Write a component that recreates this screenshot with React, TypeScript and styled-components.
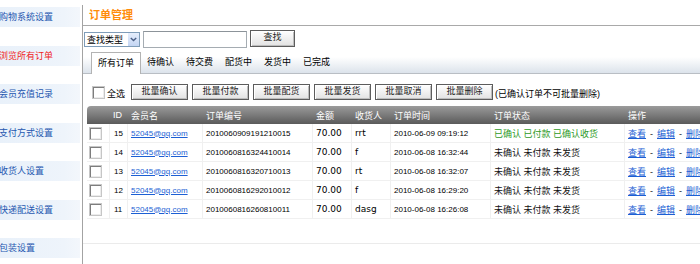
import styled, { createGlobalStyle } from 'styled-components';

type Order = {
  id: number
  no: string
  receiver: string
  time: string
  status: string
  done: boolean
}

const orders: Order[] = [
  { id: 15, no: '2010060909191210015', receiver: 'rrt', time: '2010-06-09 09:19:12', status: '已确认 已付款 已确认收货', done: true },
  { id: 14, no: '2010060816324410014', receiver: 'f', time: '2010-06-08 16:32:44', status: '未确认 未付款 未发货', done: false },
  { id: 13, no: '2010060816320710013', receiver: 'rt', time: '2010-06-08 16:32:07', status: '未确认 未付款 未发货', done: false },
  { id: 12, no: '2010060816292010012', receiver: 'f', time: '2010-06-08 16:29:20', status: '未确认 未付款 未发货', done: false },
  { id: 11, no: '2010060816260810011', receiver: 'dasg', time: '2010-06-08 16:26:08', status: '未确认 未付款 未发货', done: false },
];

const menu = ['购物系统设置', '浏览所有订单', '会员充值记录', '支付方式设置', '收货人设置', '快递配送设置', '包装设置'];
const tabs = ['所有订单', '待确认', '待交费', '配货中', '发货中', '已完成'];
const batch = ['批量确认', '批量付款', '批量配货', '批量发货', '批量取消', '批量删除'];

const GlobalStyle = createGlobalStyle`
  html, body {
    margin: 0;
    padding: 0;
    background: #fff;
    overflow: hidden;
  }
  body {
    font-family: "Liberation Sans", "Noto Sans CJK SC", sans-serif;
    font-size: 9px;
    color: #000;
  }
`;

const Page = styled.div`
  display: flex;
  align-items: flex-start;
  width: 700px;
  height: 264px;
  overflow: hidden;
`;

const Sidebar = styled.div`
  flex: none;
  width: 80px;
  margin-right: 2px;
  padding-top: 7px;
  display: flex;
  flex-direction: column;
  gap: 18.5px;
`;

const MenuItem = styled.div<{ $active?: boolean }>`
  height: 20px;
  line-height: 20px;
  background: linear-gradient(to right, #e9f1fa 0%, #eef4fb 80%, #f3f7fc 100%);
  color: ${(p) => (p.$active ? '#f01c1c' : '#2557b0')};
  white-space: nowrap;
  overflow: hidden;
  text-indent: -1px;
`;

const Main = styled.div`
  flex: 1;
  min-width: 0;
  overflow: hidden;
  margin-top: 5px;
  height: 259px;
  border-left: 1px solid #a3a3a3;
`;

const Title = styled.div`
  height: 20px;
  line-height: 20px;
  padding-left: 6px;
  border-bottom: 1px solid #a9a9a9;
  color: #ff8c0a;
  font-size: 11px;
  font-weight: bold;
`;

const SearchRow = styled.div`
  display: flex;
  align-items: center;
  gap: 3px;
  height: 18px;
  margin-top: 4px;
  padding-left: 1px;
`;

const SelectBox = styled.div`
  box-sizing: border-box;
  width: 56px;
  height: 15px;
  border: 1px solid #7f9db9;
  display: flex;
  align-items: center;
  justify-content: space-between;
  padding-left: 2px;
`;

const SelectArrow = styled.span`
  width: 11px;
  height: 13px;
  background: linear-gradient(#e6eefc, #c3d5f3);
  display: flex;
  align-items: center;
  justify-content: center;
`;

const TextInput = styled.div`
  box-sizing: border-box;
  width: 104px;
  height: 17px;
  border: 1px solid #a5acb2;
  border-top-color: #8c9399;
  background: #fff;
`;

const Button = styled.button<{ $w: number }>`
  box-sizing: border-box;
  width: ${(p) => p.$w}px;
  height: 16px;
  padding: 0 0 2px;
  border: 1px solid #5c5c5c;
  background: linear-gradient(#ffffff, #e2e2e2);
  box-shadow: inset 1px 1px 0 #fff, inset -1px -1px 0 #bdbdbd;
  font-family: "Liberation Sans", "Noto Sans CJK SC", sans-serif;
  font-size: 9px;
  line-height: 12px;
  color: #222;
`;

const SearchButton = styled(Button)`
  height: 17px;
  margin-top: -2px;
`;

const TabBar = styled.div`
  display: flex;
  height: 21px;
  margin-top: 4px;
  padding-left: 8px;
  border-bottom: 1px solid #b9bec4;
  background: linear-gradient(to bottom, #fff 0, #fff 5px, #dce3eb 100%);
`;

const Tab = styled.div<{ $active?: boolean }>`
  height: ${(p) => (p.$active ? 22 : 21)}px;
  line-height: 21px;
  padding: 0 6px;
  white-space: nowrap;
  ${(p) => p.$active && `
    background: #fff;
    border: 1px solid #b3b3b3;
    border-bottom: none;
    box-sizing: border-box;
    margin-bottom: -1px;
  `}
`;

const BatchRow = styled.div`
  display: flex;
  align-items: center;
  height: 16px;
  margin-top: 10px;
  padding-left: 9px;
  white-space: nowrap;
`;

const Check = styled.span`
  display: inline-block;
  box-sizing: border-box;
  width: 13px;
  height: 13px;
  border: 1px solid #c6c6c6;
  background: #fff;
  box-shadow: inset 1px 1px 0 #7d7d7d, inset -1px -1px 0 #ececec;
  vertical-align: middle;
`;

const CheckLabel = styled.span`
  margin-left: 2px;
  margin-top: 3px;
`;

const ButtonGroup = styled.div`
  display: flex;
  gap: 4px;
  margin-left: 6px;
`;

const Note = styled.span`
  margin-left: 2px;
  margin-top: 3px;
`;

const Table = styled.table`
  margin: 6px 0 0 4px;
  width: 640px;
  border-collapse: separate;
  border-spacing: 0;
  table-layout: fixed;

  th {
    height: 18px;
    padding: 0 0 0 3px;
    text-align: left;
    font-weight: normal;
    color: #fff;
    font-size: 9px;
    background: linear-gradient(#9b9b9b, #5a5a5a);
    white-space: nowrap;
  }
  th:first-child {
    border-top-left-radius: 4px;
  }
  td {
    box-sizing: border-box;
    height: 19px;
    padding: 0 0 0 3px;
    border-right: 1px solid #f0f0f0;
    border-bottom: 1px solid #f0f0f0;
    font-size: 8px;
    white-space: nowrap;
    overflow: hidden;
  }
  td.check {
    padding-left: 2px;
  }
  td.id {
    padding-left: 4px;
  }
`;

const Wide = styled.span`
  font-family: "DejaVu Sans", sans-serif;
  font-size: 9px;
`;

const Status = styled.span<{ $done: boolean }>`
  font-size: 9px;
  color: ${(p) => (p.$done ? '#2e9a1e' : '#111')};
`;

const Link = styled.a`
  color: #1c5fd4;
  text-decoration: underline;
`;

const Ops = styled.span`
  font-size: 9px;
  color: #222;
`;

const Sep = styled.span`
  margin: 0 4px;
`;

const Footer = styled.div`
  height: 24px;
  border-bottom: 1px solid #ebebeb;
`;

export default function App() {
  return (
    <>
      <GlobalStyle />
      <Page>
        <Sidebar>
          {menu.map((m, i) => (
            <MenuItem key={m} $active={i === 1}>{m}</MenuItem>
          ))}
        </Sidebar>
        <Main>
          <Title>订单管理</Title>
          <SearchRow>
            <SelectBox>
              查找类型
              <SelectArrow>
                <svg width="7" height="5" viewBox="0 0 7 5">
                  <path d="M0.8 1 L3.5 3.6 L6.2 1" fill="none" stroke="#4a5f86" strokeWidth="1.4" />
                </svg>
              </SelectArrow>
            </SelectBox>
            <TextInput />
            <SearchButton $w={45}>查找</SearchButton>
          </SearchRow>
          <TabBar>
            {tabs.map((t, i) => (
              <Tab key={t} $active={i === 0}>{t}</Tab>
            ))}
          </TabBar>
          <BatchRow>
            <Check />
            <CheckLabel>全选</CheckLabel>
            <ButtonGroup>
              {batch.map((b) => (
                <Button key={b} $w={57}>{b}</Button>
              ))}
            </ButtonGroup>
            <Note>(已确认订单不可批量删除)</Note>
          </BatchRow>
          <Table>
            <colgroup>
              <col style={{ width: 23 }} />
              <col style={{ width: 18 }} />
              <col style={{ width: 75 }} />
              <col style={{ width: 110 }} />
              <col style={{ width: 39 }} />
              <col style={{ width: 39 }} />
              <col style={{ width: 100 }} />
              <col style={{ width: 134 }} />
              <col style={{ width: 102 }} />
            </colgroup>
            <thead>
              <tr>
                <th />
                <th>ID</th>
                <th>会员名</th>
                <th>订单编号</th>
                <th>金额</th>
                <th>收货人</th>
                <th>订单时间</th>
                <th>订单状态</th>
                <th>操作</th>
              </tr>
            </thead>
            <tbody>
              {orders.map((o) => (
                <tr key={o.id}>
                  <td className="check"><Check /></td>
                  <td className="id">{o.id}</td>
                  <td><Link>52045@qq.com</Link></td>
                  <td>{o.no}</td>
                  <td><Wide>70.00</Wide></td>
                  <td><Wide>{o.receiver}</Wide></td>
                  <td>{o.time}</td>
                  <td><Status $done={o.done}>{o.status}</Status></td>
                  <td>
                    <Ops>
                      <Link>查看</Link><Sep>-</Sep><Link>编辑</Link><Sep>-</Sep><Link>删除</Link>
                    </Ops>
                  </td>
                </tr>
              ))}
            </tbody>
          </Table>
          <Footer />
        </Main>
      </Page>
    </>
  );
}
